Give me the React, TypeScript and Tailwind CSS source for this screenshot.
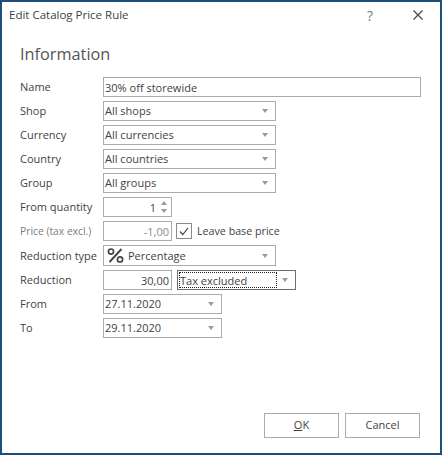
import React from "react";

const font = "font-['Open_Sans',sans-serif]";

function Caret({ color = "#9a9a9a" }: { color?: string }) {
  return (
    <svg width="6" height="4" viewBox="0 0 6 4" className="shrink-0">
      <path d="M0 0H6L3 4Z" fill={color} />
    </svg>
  );
}

function Label({ children, muted }: { children: React.ReactNode; muted?: boolean }) {
  return (
    <div className={`w-[83px] shrink-0 whitespace-nowrap leading-[20px] ${muted ? "text-[10.3px] text-[#7d7d7d]" : "text-[11px] text-[#3f3f3f]"}`}>
      {children}
    </div>
  );
}

function Select({ value, w = "w-[173px]" }: { value: string; w?: string }) {
  return (
    <div className={`${w} h-[20px] border border-[#ababab] bg-white flex items-center pl-[1px] pr-[7px] justify-between`}>
      <span className="text-[11px] leading-none text-[#3f3f3f] mb-[2px]">{value}</span>
      <Caret />
    </div>
  );
}

function Row({ label, muted, children }: { label: string; muted?: boolean; children: React.ReactNode }) {
  return (
    <div className="flex items-center h-[20px]">
      <Label muted={muted}>{label}</Label>
      {children}
    </div>
  );
}

export default function App() {
  return (
    <div className={`${font} w-[442px] h-[455px] bg-white border-2 border-[#1f4e79] flex flex-col`}>
      <div className="flex items-center h-[26px] pl-[7px] pr-[17px] shrink-0">
        <span className="text-[11.5px] text-[#3f3f3f]">Edit Catalog Price Rule</span>
        <span className="ml-auto text-[14px] text-[#777777] mr-[40px]">?</span>
        <svg width="10" height="10" viewBox="0 0 10 10">
          <path d="M0.5 0.5L9.5 9.5M9.5 0.5L0.5 9.5" stroke="#444444" strokeWidth="1.2" />
        </svg>
      </div>
      <div className="pl-[18px] pr-[19px] flex flex-col flex-1">
        <div className="text-[16.3px] leading-[22px] text-[#555555] mt-[15px] mb-[12px]">Information</div>
        <div className="flex flex-col gap-[4px]">
          <Row label="Name">
            <div className="flex-1 h-[20px] border border-[#ababab] flex items-center pl-[1px]">
              <span className="text-[11px] leading-none text-[#3f3f3f]">30% off storewide</span>
            </div>
          </Row>
          <Row label="Shop"><Select value="All shops" /></Row>
          <Row label="Currency"><Select value="All currencies" /></Row>
          <Row label="Country"><Select value="All countries" /></Row>
          <Row label="Group"><Select value="All groups" /></Row>
          <Row label="From quantity">
            <div className="w-[69px] h-[20px] border border-[#ababab] flex items-center justify-end pr-[4px] gap-[5px]">
              <span className="text-[11px] leading-none text-[#3f3f3f]">1</span>
              <div className="flex flex-col gap-[4px]">
                <svg width="6" height="4" viewBox="0 0 6 4"><path d="M0 4H6L3 0Z" fill="#9a9a9a" /></svg>
                <Caret />
              </div>
            </div>
          </Row>
          <Row label="Price (tax excl.)" muted>
            <div className="w-[69px] h-[20px] border border-[#ababab] flex items-center justify-end pr-[2px]">
              <span className="text-[11px] leading-none text-[#8a8a8a]">-1,00</span>
            </div>
            <div className="ml-[4px] w-[16px] h-[16px] border border-[#8a8a8a] flex items-center justify-center">
              <svg width="10" height="9" viewBox="0 0 10 9">
                <path d="M1 4.5L3.8 7.5L9 1" fill="none" stroke="#444444" strokeWidth="1.2" />
              </svg>
            </div>
            <span className="ml-[5px] text-[10.7px] text-[#3f3f3f] whitespace-nowrap">Leave base price</span>
          </Row>
          <div className="flex items-center h-[21px]">
            <Label>Reduction type</Label>
            <div className="w-[173px] h-[21px] border border-[#ababab] flex items-center pl-[3px] pr-[7px]">
              <svg width="17" height="15" viewBox="0 0 17 15" className="shrink-0">
                <circle cx="4" cy="3.6" r="2.6" fill="none" stroke="#444444" strokeWidth="1.7" />
                <circle cx="13" cy="11.4" r="2.6" fill="none" stroke="#444444" strokeWidth="1.7" />
                <path d="M14.5 1L2.5 14" stroke="#444444" strokeWidth="1.9" />
              </svg>
              <span className="ml-[4px] text-[11px] leading-none text-[#3f3f3f]">Percentage</span>
              <span className="ml-auto"><Caret /></span>
            </div>
          </div>
          <Row label="Reduction">
            <div className="w-[69px] h-[20px] border border-[#ababab] flex items-center justify-end pr-[2px]">
              <span className="text-[11px] leading-none text-[#3f3f3f]">30,00</span>
            </div>
            <div className="ml-[5px] w-[119px] h-[20px] border border-[#6e6e6e] flex items-center pl-[1px] pr-[7px]">
              <span className="w-[98px] h-[16px] border border-dotted border-[#222222] text-[11px] leading-[15px] text-[#3f3f3f]">Tax excluded</span>
              <span className="ml-auto"><Caret /></span>
            </div>
          </Row>
          <Row label="From"><Select value="27.11.2020" w="w-[119px]" /></Row>
          <Row label="To"><Select value="29.11.2020" w="w-[119px]" /></Row>
        </div>
        <div className="mt-auto mb-[15px] mr-[1px] flex justify-end gap-[6px]">
          <div className="w-[75px] h-[25px] border border-[#ababab] flex items-center justify-center text-[11px] text-[#3f3f3f]">
            <span><span className="underline">O</span>K</span>
          </div>
          <div className="w-[75px] h-[25px] border border-[#ababab] flex items-center justify-center text-[11px] text-[#3f3f3f]">Cancel</div>
        </div>
      </div>
    </div>
  );
}
